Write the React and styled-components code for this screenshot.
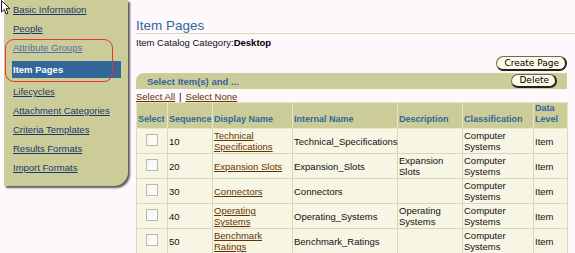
import React from "react";
import styled, { createGlobalStyle } from "styled-components";

const GlobalStyle = createGlobalStyle`
  html, body {
    margin: 0;
    padding: 0;
    background: #fcf8fc;
  }
  body {
    font-family: "Liberation Sans", Arial, sans-serif;
    font-size: 9.5px;
    color: #111;
  }
`;

const navItems = [
  { label: "Basic Information" },
  { label: "People" },
  { label: "Attribute Groups", visited: true },
  { label: "Item Pages", selected: true },
  { label: "Lifecycles" },
  { label: "Attachment Categories" },
  { label: "Criteria Templates" },
  { label: "Results Formats" },
  { label: "Import Formats" },
];

const rows = [
  { seq: "10", display: "Technical Specifications", internal: "Technical_Specifications", desc: "" },
  { seq: "20", display: "Expansion Slots", internal: "Expansion_Slots", desc: "Expansion Slots" },
  { seq: "30", display: "Connectors", internal: "Connectors", desc: "" },
  { seq: "40", display: "Operating Systems", internal: "Operating_Systems", desc: "Operating Systems" },
  { seq: "50", display: "Benchmark Ratings", internal: "Benchmark_Ratings", desc: "" },
];

const columns = [
  { label: "Select", width: 31 },
  { label: "Sequence", width: 45 },
  { label: "Display Name", width: 80 },
  { label: "Internal Name", width: 105 },
  { label: "Description", width: 65 },
  { label: "Classification", width: 71 },
  { label: "Data Level", width: 34 },
];

const App = () => {
  return (
    <>
      <GlobalStyle />
      <Page>
        <Cursor viewBox="0 0 10 15" width="10" height="15">
          <path
            d="M0.5 0.5 L0.5 12 L3.2 9.4 L5.2 14 L7 13.2 L5 8.7 L8.8 8.7 Z"
            fill="#fff"
            stroke="#000"
            strokeWidth="0.9"
            strokeLinejoin="miter"
          />
        </Cursor>

        <Sidebar>
          <Highlight />
          {navItems.map((item) => (
            <NavItem key={item.label} $selected={item.selected}>
              <NavLink href="#" $visited={item.visited} $selected={item.selected}>
                {item.label}
              </NavLink>
            </NavItem>
          ))}
        </Sidebar>

        <Main>
          <Title>Item Pages</Title>
          <Category>
            Item Catalog Category:<b>Desktop</b>
          </Category>

          <ButtonRow>
            <PillButton>Create Page</PillButton>
          </ButtonRow>

          <ActionBar>
            <BarTitle>Select Item(s) and ...</BarTitle>
            <PillButton $small>Delete</PillButton>
          </ActionBar>

          <SelectLinks>
            <BrownLink href="#">Select All</BrownLink>
            <Sep>|</Sep>
            <BrownLink href="#">Select None</BrownLink>
          </SelectLinks>

          <Table>
            <colgroup>
              {columns.map((c) => (
                <col key={c.label} style={{ width: c.width }} />
              ))}
            </colgroup>
            <thead>
              <tr>
                {columns.map((c) => (
                  <Th key={c.label}>{c.label}</Th>
                ))}
              </tr>
            </thead>
            <tbody>
              {rows.map((r) => (
                <tr key={r.seq}>
                  <Td $center>
                    <Check />
                  </Td>
                  <Td>{r.seq}</Td>
                  <Td>
                    <BrownLink href="#">{r.display}</BrownLink>
                  </Td>
                  <Td>{r.internal}</Td>
                  <Td>{r.desc}</Td>
                  <Td>Computer Systems</Td>
                  <Td>Item</Td>
                </tr>
              ))}
            </tbody>
          </Table>
        </Main>
      </Page>
    </>
  );
};

const Page = styled.div`
  position: relative;
  display: flex;
  align-items: flex-start;
  width: 575px;
  height: 253px;
  overflow: hidden;
`;

const Cursor = styled.svg`
  position: absolute;
  left: 1px;
  top: 0;
  z-index: 5;
`;

const Sidebar = styled.nav`
  position: relative;
  box-sizing: border-box;
  width: 124px;
  height: 186px;
  margin-left: 4px;
  padding: 0 7px 0 8px;
  background: #cccc99;
  border-bottom-right-radius: 14px;
  box-shadow: 2px 2px 2px rgba(40, 40, 40, 0.75);
  flex-shrink: 0;
`;

const Highlight = styled.div`
  position: absolute;
  left: 1px;
  top: 39px;
  width: 108px;
  height: 43px;
  box-sizing: border-box;
  border: 1.5px solid #e4333a;
  border-radius: 9px;
  pointer-events: none;
`;

const NavItem = styled.div`
  height: ${({ $selected }) => ($selected ? "17px" : "19px")};
  line-height: ${({ $selected }) => ($selected ? "17px" : "19px")};
  margin: ${({ $selected }) => ($selected ? "4px 0" : "0")};
  background: ${({ $selected }) => ($selected ? "#336699" : "transparent")};
  white-space: nowrap;

  &:first-of-type {
    margin-top: -2px;
  }
`;

const NavLink = styled.a`
  color: ${({ $selected, $visited }) =>
    $selected ? "#ffffff" : $visited ? "#4a72ab" : "#1a386c"};
  font-weight: ${({ $selected }) => ($selected ? "bold" : "normal")};
  text-decoration: ${({ $selected }) => ($selected ? "none" : "underline")};
  padding-left: 1px;
`;

const Main = styled.main`
  flex: 1;
  margin-left: 8px;
  padding-right: 8px;
  min-width: 0;
`;

const Title = styled.h1`
  margin: 19px -8px 0 0;
  height: 14px;
  line-height: 14px;
  font-size: 13.5px;
  font-weight: normal;
  color: #336699;
  border-bottom: 1px solid #dcd8b4;
`;

const Category = styled.div`
  margin-top: 3px;
  line-height: 11px;
  color: #111;

  b {
    color: #000;
  }
`;

const ButtonRow = styled.div`
  display: flex;
  justify-content: flex-end;
  margin-top: 8px;
`;

const PillButton = styled.button`
  box-sizing: border-box;
  height: ${({ $small }) => ($small ? "14px" : "15px")};
  padding: 0 ${({ $small }) => ($small ? "6px" : "6px")} 0 ${({ $small }) => ($small ? "7px" : "7px")};
  font-family: "DejaVu Sans", Verdana, sans-serif;
  font-size: 9px;
  line-height: 1;
  color: #000;
  background: #fcfbe8;
  border: 1px solid #6a6a5a;
  border-right: 2px solid #222;
  border-bottom: 2px solid #222;
  border-radius: 8px;
  cursor: pointer;
`;

const ActionBar = styled.div`
  display: flex;
  align-items: center;
  justify-content: space-between;
  height: 16px;
  margin-top: 2px;
  padding: 0 10px 0 11px;
  background: #cccc99;
  border-top-left-radius: 8px;
`;

const BarTitle = styled.span`
  font-weight: bold;
  color: #336699;
`;

const SelectLinks = styled.div`
  display: flex;
  align-items: center;
  height: 12px;
  margin-top: 1px;
`;

const BrownLink = styled.a`
  color: #663300;
  text-decoration: underline;
`;

const Sep = styled.span`
  margin: 0 4px;
  color: #000;
`;

const Table = styled.table`
  width: 431px;
  table-layout: fixed;
  border-collapse: collapse;
  background: #f7f6e4;

  tr {
    height: 25px;
  }
`;

const Th = styled.th`
  padding: 0 1px 3px 1px;
  background: #cccc99;
  border: 1px solid #e6e5c9;
  color: #336699;
  font-size: 9px;
  font-weight: bold;
  text-align: left;
  vertical-align: bottom;
  line-height: 11px;
`;

const Td = styled.td`
  padding: 1px;
  border: 1px solid #dad7b6;
  text-align: ${({ $center }) => ($center ? "center" : "left")};
  vertical-align: middle;
  line-height: 11px;
  color: #111;
`;

const Check = styled.span`
  display: inline-block;
  width: 10px;
  height: 10px;
  margin-top: -4px;
  vertical-align: middle;
  background: linear-gradient(135deg, #f4f4f0, #ffffff);
  border: 1px solid #b9b9ad;
`;

export default App;
